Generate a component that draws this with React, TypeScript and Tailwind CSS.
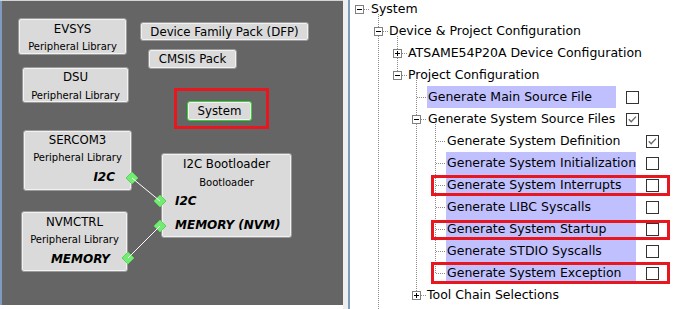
import React from "react";

const F = "font-['DejaVu_Sans',sans-serif]";

function Expander({ open }: { open: boolean }) {
  return (
    <svg width="9" height="9" viewBox="0 0 9 9" className="shrink-0 block" shapeRendering="crispEdges">
      <rect x="0.5" y="0.5" width="8" height="8" fill="#fff" stroke="#808080" />
      <line x1="2" y1="4.5" x2="7" y2="4.5" stroke="#000" />
      {!open && <line x1="4.5" y1="2" x2="4.5" y2="7" stroke="#000" />}
    </svg>
  );
}

function Check({ checked }: { checked?: boolean }) {
  return (
    <svg width="13" height="13" viewBox="0 0 13 13" className="shrink-0 block">
      <rect x="0.5" y="0.5" width="12" height="12" fill="#fff" stroke="#333" shapeRendering="crispEdges" />
      {checked && <path d="M2.8 6.2 L5.2 8.8 L10 3.6" fill="none" stroke="#6a6a6a" strokeWidth="1.4" />}
    </svg>
  );
}

function Diamond({ cx, cy }: { cx: number; cy: number }) {
  const p = `${cx},${cy - 6} ${cx + 6},${cy} ${cx},${cy + 6} ${cx - 6},${cy}`;
  return <polygon points={p} fill="#74ec74" stroke="#5ad25a" strokeWidth="1" />;
}

export default function App() {
  const rowCls = "h-[22px] flex items-center text-[12.5px] text-black whitespace-nowrap";
  return (
    <div className={`w-[673px] h-[309px] bg-white flex overflow-hidden ${F}`}>
      {/* Left diagram canvas */}
      <div className="w-[343px] h-[309px] shrink-0 flex flex-col">
        <div className="relative w-[343px] h-[305px] bg-[#656565] shadow-[inset_0_1px_0_#d4d4d4,inset_2px_0_0_#7f9cc0]">
          {/* EVSYS */}
          <div className="absolute left-[18px] top-[18px] w-[109px] h-[37px] rounded-[3px] border border-[#9a9a9a] bg-[#dadada] shadow-[inset_0_0_0_1px_#f2f2f2] flex flex-col items-center pt-[3px]">
            <div className="text-[11.75px] leading-[14px]">EVSYS</div>
            <div className="text-[10px] leading-[12px] mt-[5px]">Peripheral Library</div>
          </div>
          {/* DSU */}
          <div className="absolute left-[22px] top-[67px] w-[107px] h-[36px] rounded-[3px] border border-[#9a9a9a] bg-[#dadada] shadow-[inset_0_0_0_1px_#f2f2f2] flex flex-col items-center pt-[2px]">
            <div className="text-[11.75px] leading-[14px]">DSU</div>
            <div className="text-[10px] leading-[12px] mt-[6px]">Peripheral Library</div>
          </div>
          {/* SERCOM3 */}
          <div className="absolute left-[23px] top-[130px] w-[109px] h-[61px] rounded-[3px] border border-[#9a9a9a] bg-[#dadada] shadow-[inset_0_0_0_1px_#f2f2f2] flex flex-col items-center pt-[2px]">
            <div className="text-[11.75px] leading-[14px]">SERCOM3</div>
            <div className="text-[10px] leading-[12px] mt-[5px]">Peripheral Library</div>
            <div className="self-end pr-[16px] text-[12px] leading-[14px] font-bold italic mt-[6px]">I2C</div>
          </div>
          {/* NVMCTRL */}
          <div className="absolute left-[21px] top-[211px] w-[107px] h-[61px] rounded-[3px] border border-[#9a9a9a] bg-[#dadada] shadow-[inset_0_0_0_1px_#f2f2f2] flex flex-col items-center pt-[3px]">
            <div className="text-[11.75px] leading-[14px]">NVMCTRL</div>
            <div className="text-[10px] leading-[12px] mt-[5px]">Peripheral Library</div>
            <div className="self-end pr-[17px] text-[12px] leading-[14px] font-bold italic mt-[6px]">MEMORY</div>
          </div>
          {/* I2C Bootloader */}
          <div className="absolute left-[161px] top-[153px] w-[131px] h-[85px] rounded-[3px] border border-[#9a9a9a] bg-[#dadada] shadow-[inset_0_0_0_1px_#f2f2f2] flex flex-col items-center pt-[3px]">
            <div className="text-[11.75px] leading-[14px]">I2C Bootloader</div>
            <div className="text-[10px] leading-[12px] mt-[6px]">Bootloader</div>
            <div className="self-start pl-[13px] text-[12px] leading-[14px] font-bold italic mt-[5px]">I2C</div>
            <div className="self-start pl-[13px] text-[12px] leading-[14px] font-bold italic mt-[10px]">MEMORY (NVM)</div>
          </div>
          {/* DFP */}
          <div className="absolute left-[140px] top-[22px] w-[169px] h-[19px] rounded-[3px] border border-[#9a9a9a] bg-[#dadada] shadow-[inset_0_0_0_1px_#f2f2f2] flex items-center justify-center text-[11.75px] leading-[14px]">
            Device Family Pack (DFP)
          </div>
          {/* CMSIS */}
          <div className="absolute left-[148px] top-[49px] w-[89px] h-[20px] rounded-[3px] border border-[#9a9a9a] bg-[#dadada] shadow-[inset_0_0_0_1px_#f2f2f2] flex items-center justify-center text-[11.75px] leading-[14px]">
            CMSIS Pack
          </div>
          {/* System */}
          <div className="absolute left-[187px] top-[101px] w-[65px] h-[20px] rounded-[3px] border border-[#2fd82f] bg-[#dadada] shadow-[inset_0_0_0_1px_#f2f2f2] flex items-center justify-center text-[11.75px] leading-[14px]">
            System
          </div>
          {/* Red highlight */}
          <div className="absolute left-[174px] top-[88px] w-[95px] h-[41px] border-[3px] border-[#e8161e]" />
          {/* connectors */}
          <svg className="absolute left-0 top-0" width="343" height="305" viewBox="0 0 343 305">
            <Diamond cx={132} cy={178} />
            <Diamond cx={160} cy={201} />
            <Diamond cx={160} cy={226} />
            <Diamond cx={128} cy={258} />
            <line x1="132" y1="178" x2="160" y2="201" stroke="#ffffff" strokeWidth="1" />
            <line x1="128" y1="258" x2="160" y2="226" stroke="#ffffff" strokeWidth="1" />
          </svg>
        </div>
      </div>
      {/* splitter */}
      <div className="w-[5px] h-[309px] bg-[#efefef] shrink-0" />
      <div className="w-[2px] h-[309px] bg-[#7f9db9] shrink-0" />
      {/* Tree panel */}
      <div className="relative flex-1 h-[309px] bg-white overflow-hidden">
        <svg className="absolute left-0 top-0 z-0" width="323" height="309" viewBox="0 0 323 309" shapeRendering="crispEdges">
          <g stroke="#8c8c8c" strokeWidth="1" strokeDasharray="1 1" fill="none">
            <line x1="28.5" y1="14" x2="28.5" y2="309" />
            <line x1="47.5" y1="36" x2="47.5" y2="75" />
            <line x1="66.5" y1="80" x2="66.5" y2="295" />
            <line x1="85.5" y1="124" x2="85.5" y2="273" />
            <line x1="10" y1="9.5" x2="20" y2="9.5" />
            <line x1="29" y1="31.5" x2="38" y2="31.5" />
            <line x1="48" y1="53.5" x2="57" y2="53.5" />
            <line x1="48" y1="75.5" x2="57" y2="75.5" />
            <line x1="67" y1="97.5" x2="76" y2="97.5" />
            <line x1="67" y1="119.5" x2="76" y2="119.5" />
            <line x1="86" y1="141.5" x2="95" y2="141.5" />
            <line x1="86" y1="163.5" x2="95" y2="163.5" />
            <line x1="86" y1="185.5" x2="95" y2="185.5" />
            <line x1="86" y1="207.5" x2="95" y2="207.5" />
            <line x1="86" y1="229.5" x2="95" y2="229.5" />
            <line x1="86" y1="251.5" x2="95" y2="251.5" />
            <line x1="86" y1="273.5" x2="95" y2="273.5" />
            <line x1="67" y1="295.5" x2="76" y2="295.5" />
          </g>
        </svg>
        <div className="relative z-10 -mt-[2px] flex flex-col">
          <div className={`${rowCls} pl-[5px]`}>
            <Expander open />
            <span className="ml-[7px]">System</span>
          </div>
          <div className={`${rowCls} pl-[24px]`}>
            <Expander open />
            <span className="ml-[6px]">Device &amp; Project Configuration</span>
          </div>
          <div className={`${rowCls} pl-[43px]`}>
            <Expander open={false} />
            <span className="ml-[6px]">ATSAME54P20A Device Configuration</span>
          </div>
          <div className={`${rowCls} pl-[43px]`}>
            <Expander open />
            <span className="ml-[6px]">Project Configuration</span>
          </div>
          <div className={`${rowCls} pl-[77px]`}>
            <span className="w-[189px] h-[22px] flex items-center bg-[#c0c0ff] pl-[1px]">Generate Main Source File</span>
            <span className="ml-[10px]"><Check /></span>
          </div>
          <div className={`${rowCls} pl-[62px]`}>
            <Expander open />
            <span className="ml-[6px] w-[189px] h-[22px] flex items-center pl-[1px]">Generate System Source Files</span>
            <span className="ml-[10px]"><Check checked /></span>
          </div>
          {[
            ["Generate System Definition", false, true],
            ["Generate System Initialization", true, false],
            ["Generate System Interrupts", true, false],
            ["Generate LIBC Syscalls", true, false],
            ["Generate System Startup", true, false],
            ["Generate STDIO Syscalls", true, false],
            ["Generate System Exception", true, false],
          ].map(([label, hl, ck]) => (
            <div key={label as string} className={`${rowCls} pl-[96px]`}>
              <span className={`w-[190px] h-[22px] flex items-center pl-[1px] ${hl ? "bg-[#c0c0ff]" : ""}`}>{label as string}</span>
              <span className="ml-[10px]"><Check checked={ck as boolean} /></span>
            </div>
          ))}
          <div className={`${rowCls} pl-[62px]`}>
            <Expander open={false} />
            <span className="ml-[6px]">Tool Chain Selections</span>
          </div>
        </div>
        {/* red annotation boxes */}
        <div className="absolute z-20 left-[81px] top-[175px] w-[239px] h-[21px] border-[3px] border-[#e8161e]" />
        <div className="absolute z-20 left-[81px] top-[220px] w-[239px] h-[20px] border-[3px] border-[#e8161e]" />
        <div className="absolute z-20 left-[81px] top-[262px] w-[239px] h-[22px] border-[3px] border-[#e8161e]" />
      </div>
    </div>
  );
}
